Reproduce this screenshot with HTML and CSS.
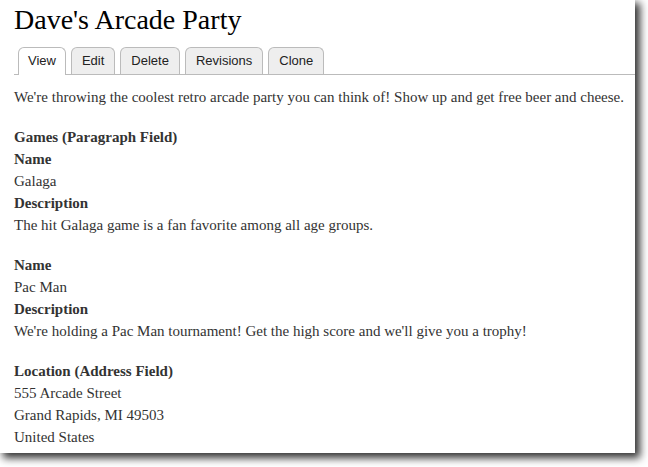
FILE: index.html
```html
<!DOCTYPE html>
<html>
<head>
    <meta charset="utf-8">
    <title>Dave's Arcade Party</title>
    <link rel="stylesheet" href="styles.css">
</head>
<body>
    <div class="page">
        <h1 class="title">Dave's Arcade Party</h1>
        <ul class="tabs">
            <li class="tab active">View</li>
            <li class="tab">Edit</li>
            <li class="tab">Delete</li>
            <li class="tab">Revisions</li>
            <li class="tab">Clone</li>
        </ul>
        <div class="content">
            <p class="body">We're throwing the coolest retro arcade party you can think of! Show up and get free beer and cheese.</p>

            <div class="field">
                <div class="label">Games (Paragraph Field)</div>
                <div class="item">
                    <div class="label">Name</div>
                    <div>Galaga</div>
                    <div class="label">Description</div>
                    <div>The hit Galaga game is a fan favorite among all age groups.</div>
                </div>
                <div class="item">
                    <div class="label">Name</div>
                    <div>Pac Man</div>
                    <div class="label">Description</div>
                    <div>We're holding a Pac Man tournament! Get the high score and we'll give you a trophy!</div>
                </div>
            </div>

            <div class="field">
                <div class="label">Location (Address Field)</div>
                <div>555 Arcade Street</div>
                <div>Grand Rapids, MI 49503</div>
                <div>United States</div>
            </div>
        </div>
    </div>
</body>
</html>
```

FILE: styles.css
```css
html, body {
    margin: 0;
    padding: 0;
    background: #fff;
}

body {
    height: 467px;
    overflow: hidden;
}

.page {
    width: 635px;
    height: 453px;
    box-sizing: border-box;
    padding: 0 0 0 14px;
    background: #fff;
    box-shadow: 4px 4px 8px 1px rgba(0, 0, 0, 0.8);
    overflow: hidden;
    font-family: "Liberation Serif", serif;
    color: #333;
}

.title {
    margin: 0;
    padding-top: 4px;
    font-size: 28px;
    line-height: 32px;
    font-weight: normal;
    color: #000;
}

.tabs {
    display: flex;
    gap: 5px;
    margin: 11px 0 0 0;
    padding: 0 0 0 4px;
    list-style: none;
    border-bottom: 1px solid #bbb;
    font-family: "Liberation Sans", sans-serif;
    font-size: 13px;
}

    .tabs .tab {
        height: 26px;
        line-height: 26px;
        padding: 0 10px;
        margin-bottom: -1px;
        background: #eee;
        border: 1px solid #bbb;
        border-bottom: none;
        border-radius: 6px 6px 0 0;
        color: #222;
    }

    .tabs .active {
        background: #fff;
        height: 27px;
        padding: 0 9px;
    }

.content {
    padding-top: 11px;
    font-size: 15px;
    line-height: 22px;
}

.body {
    margin: 0 0 18px 0;
}

.field {
    margin-bottom: 18px;
}

.item {
    margin-bottom: 18px;
}

.label {
    font-weight: bold;
}
```
